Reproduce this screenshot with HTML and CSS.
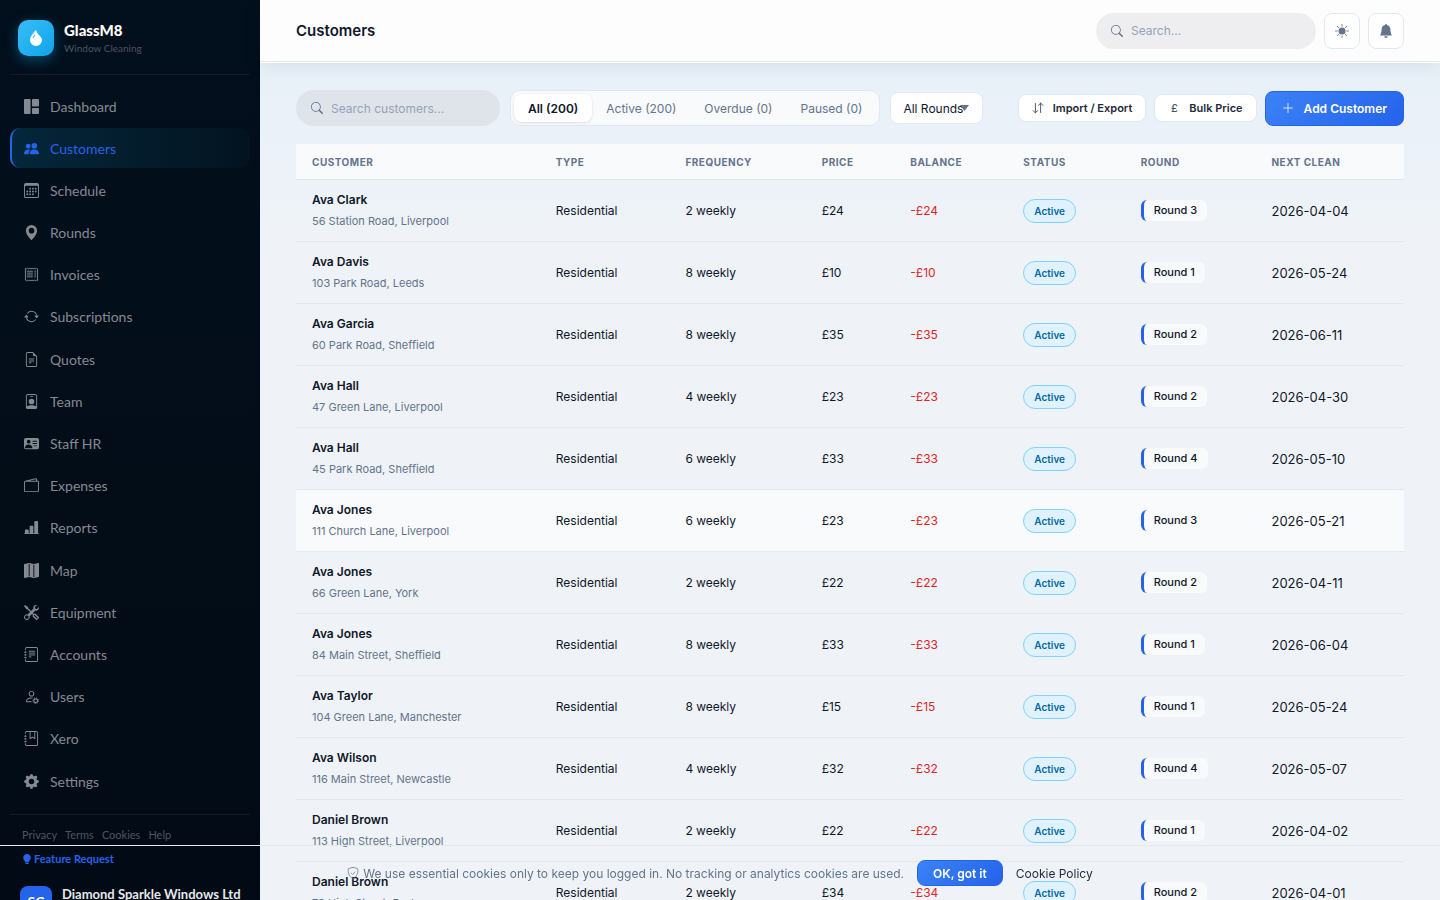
FILE: index.html
```html
<!DOCTYPE html>
<html lang="en">
<head>
  <meta charset="UTF-8" />
  <meta name="viewport" content="width=device-width, initial-scale=1.0" />
  <title>Customers - GlassM8</title>
  <link rel="stylesheet" href="styles.css">
</head>
<body>
  <!-- Icon sprite -->
  <svg class="sprite" aria-hidden="true">
    <symbol id="i-drop" viewBox="0 0 16 16"><path fill-rule="evenodd" d="M8 16a6 6 0 0 0 6-6c0-1.655-1.122-2.904-2.432-4.362C10.254 4.176 8.75 2.503 8 0c0 0-6 5.686-6 10a6 6 0 0 0 6 6M6.646 4.646l.708.708c-.29.29-1.128 1.311-1.907 2.87l-.894-.448c.82-1.641 1.717-2.753 2.093-3.13"/></symbol>
    <symbol id="i-grid" viewBox="0 0 16 16"><rect width="7" height="16" rx="1"/><rect x="8.500" width="7.500" height="8" rx="1"/><rect x="8.500" y="9.500" width="7.500" height="6.500" rx="1"/></symbol>
    <symbol id="i-people" viewBox="0 0 16 16"><path d="M7 14s-1 0-1-1 1-4 5-4 5 3 5 4-1 1-1 1zm4-6a3 3 0 1 0 0-6 3 3 0 0 0 0 6m-5.784 6A2.24 2.24 0 0 1 5 13c0-1.355.68-2.75 1.936-3.720A6.300 6.300 0 0 0 5 9c-4 0-5 3-5 4s1 1 1 1zM4.500 8a2.500 2.500 0 1 0 0-5 2.500 2.500 0 0 0 0 5"/></symbol>
    <symbol id="i-calendar" viewBox="0 0 16 16"><path fill-rule="evenodd" d="M14 0H2a2 2 0 0 0-2 2v12a2 2 0 0 0 2 2h12a2 2 0 0 0 2-2V2a2 2 0 0 0-2-2M1 3.857C1 3.384 1.448 3 2 3h12c.552 0 1 .384 1 .857v10.286c0 .473-.448.857-1 .857H2c-.552 0-1-.384-1-.857z"/><path d="M6.500 7a1 1 0 1 0 0-2 1 1 0 0 0 0 2m3 0a1 1 0 1 0 0-2 1 1 0 0 0 0 2m3 0a1 1 0 1 0 0-2 1 1 0 0 0 0 2m-9 3a1 1 0 1 0 0-2 1 1 0 0 0 0 2m3 0a1 1 0 1 0 0-2 1 1 0 0 0 0 2m3 0a1 1 0 1 0 0-2 1 1 0 0 0 0 2m3 0a1 1 0 1 0 0-2 1 1 0 0 0 0 2m-9 3a1 1 0 1 0 0-2 1 1 0 0 0 0 2m3 0a1 1 0 1 0 0-2 1 1 0 0 0 0 2m3 0a1 1 0 1 0 0-2 1 1 0 0 0 0 2"/></symbol>
    <symbol id="i-pin" viewBox="0 0 16 16"><path fill-rule="evenodd" d="M8 16s6-5.686 6-10A6 6 0 0 0 2 6c0 4.314 6 10 6 10m0-7a3 3 0 1 1 0-6 3 3 0 0 1 0 6"/></symbol>
    <symbol id="i-receipt" viewBox="0 0 16 16"><path fill="none" stroke="currentColor" d="M1.500 1.500l1 .5 1-.7 1 .7 1-.7 1 .7 1-.7 1 .7 1-.7 1 .7 1-.7 1 .7 1-.7 1 .7v12.500l-1-.5-1 .7-1-.7-1 .7-1-.7-1 .7-1-.7-1 .7-1-.7-1 .7-1-.7-1 .7-1-.7z"/><path fill="none" stroke="currentColor" d="M3 4.500h6.500M3 6.500h6.500M3 8.500h6.500M3 10.500h6.500M11 4.500h2M11 6.500h2M11 8.500h2M11 10.500h2"/></symbol>
    <symbol id="i-repeat" viewBox="0 0 16 16"><path d="M11.534 7h3.932a.25.25 0 0 1 .192.41l-1.966 2.36a.25.25 0 0 1-.384 0l-1.966-2.36a.25.25 0 0 1 .192-.41m-11 2h3.932a.25.25 0 0 0 .192-.41L2.692 6.23a.25.25 0 0 0-.384 0L.342 8.59A.25.25 0 0 0 .534 9"/><path d="M8 3c-1.552 0-2.94.707-3.857 1.818a.5.5 0 1 1-.771-.636A6.002 6.002 0 0 1 13.917 7H12.900A5 5 0 0 0 8 3M3.100 9a5.002 5.002 0 0 0 8.757 2.182.5.5 0 1 1 .771.636A6.002 6.002 0 0 1 2.083 9z"/></symbol>
    <symbol id="i-file" viewBox="0 0 16 16"><path d="M5.500 7a.5.5 0 0 0 0 1h5a.5.5 0 0 0 0-1zM5 9.500a.5.5 0 0 1 .5-.5h5a.5.5 0 0 1 0 1h-5a.5.5 0 0 1-.5-.5m0 2a.5.5 0 0 1 .5-.5h2a.5.5 0 0 1 0 1h-2a.5.5 0 0 1-.5-.5"/><path fill-rule="evenodd" d="M9.500 0H4a2 2 0 0 0-2 2v12a2 2 0 0 0 2 2h8a2 2 0 0 0 2-2V4.500zm0 1v2A1.500 1.500 0 0 0 11 4.500h2V14a1 1 0 0 1-1 1H4a1 1 0 0 1-1-1V2a1 1 0 0 1 1-1z"/></symbol>
    <symbol id="i-badge" viewBox="0 0 16 16"><path d="M6.500 2a.5.5 0 0 0 0 1h3a.5.5 0 0 0 0-1zM11 8a3 3 0 1 1-6 0 3 3 0 0 1 6 0"/><path fill-rule="evenodd" d="M4.500 0A2.500 2.500 0 0 0 2 2.500V14a2 2 0 0 0 2 2h8a2 2 0 0 0 2-2V2.500A2.500 2.500 0 0 0 11.500 0zM3 2.500A1.500 1.500 0 0 1 4.500 1h7A1.500 1.500 0 0 1 13 2.500v10.795a4.200 4.200 0 0 0-.776-.492C11.392 12.387 10.063 12 8 12s-3.392.387-4.224.803a4.200 4.200 0 0 0-.776.492z"/></symbol>
    <symbol id="i-vcard" viewBox="0 0 16 16"><path fill-rule="evenodd" d="M0 4a2 2 0 0 1 2-2h12a2 2 0 0 1 2 2v8a2 2 0 0 1-2 2H2a2 2 0 0 1-2-2zm9 1.500a.5.5 0 0 0 .5.5h4a.5.5 0 0 0 0-1h-4a.5.5 0 0 0-.5.5M9 8a.5.5 0 0 0 .5.5h4a.5.5 0 0 0 0-1h-4A.5.5 0 0 0 9 8m1 2.500a.5.5 0 0 0 .5.5h3a.5.5 0 0 0 0-1h-3a.5.5 0 0 0-.5.5m-1 2C9 10.567 7.210 9 5 9c-2.086 0-3.800 1.398-3.984 3.181A1 1 0 0 0 2 13h6.960q.04-.245.04-.5M7 6a2 2 0 1 0-4 0 2 2 0 0 0 4 0"/></symbol>
    <symbol id="i-wallet" viewBox="0 0 16 16"><path fill-rule="evenodd" d="M12.136.326A1.500 1.500 0 0 1 14 1.780V3h.5A1.500 1.500 0 0 1 16 4.500v9a1.500 1.500 0 0 1-1.500 1.500h-13A1.500 1.500 0 0 1 0 13.500v-9a1.500 1.500 0 0 1 1.432-1.499zM5.562 3H13V1.780a.5.5 0 0 0-.621-.484zM1.500 4a.5.5 0 0 0-.5.5v9a.5.5 0 0 0 .5.5h13a.5.5 0 0 0 .5-.5v-9a.5.5 0 0 0-.5-.5z"/></symbol>
    <symbol id="i-chart" viewBox="0 0 16 16"><path d="M11 2a1 1 0 0 1 1-1h2a1 1 0 0 1 1 1v12h.5a.5.5 0 0 1 0 1H.5a.5.5 0 0 1 0-1H1v-3a1 1 0 0 1 1-1h2a1 1 0 0 1 1 1v3h1V7a1 1 0 0 1 1-1h2a1 1 0 0 1 1 1v7h1z"/></symbol>
    <symbol id="i-map" viewBox="0 0 16 16"><path fill-rule="evenodd" d="M16 .5a.5.5 0 0 0-.598-.49L10.500.99 5.598.01a.5.5 0 0 0-.196 0l-5 1A.5.5 0 0 0 0 1.500v14a.5.5 0 0 0 .598.49l4.902-.98 4.902.98a.5.5 0 0 0 .196 0l5-1A.5.5 0 0 0 16 14.500zM5 14.090V1.110l.5-.1.5.1v12.980l-.402-.08a.5.5 0 0 0-.196 0zm5 .8V1.910l.402.08a.5.5 0 0 0 .196 0L11 1.910v12.980l-.5.1z"/></symbol>
    <symbol id="i-tools" viewBox="0 0 16 16"><path fill-rule="evenodd" d="M1 0 0 1l2.200 3.081a1 1 0 0 0 .815.419h.07a1 1 0 0 1 .708.293l2.675 2.675-2.617 2.654A3.003 3.003 0 0 0 0 13a3 3 0 1 0 5.878-.851l2.654-2.617.968.968-.305.914a1 1 0 0 0 .242 1.023l3.270 3.270a.997.997 0 0 0 1.414 0l1.586-1.586a.997.997 0 0 0 0-1.414l-3.270-3.270a1 1 0 0 0-1.023-.242L10.500 9.500l-.96-.96 2.680-2.643A3.005 3.005 0 0 0 16 3q0-.405-.102-.777l-2.140 2.141L12 4l-.364-1.757L13.777.102a3 3 0 0 0-3.675 3.680L7.462 6.460 4.793 3.793a1 1 0 0 1-.293-.707v-.071a1 1 0 0 0-.419-.814zm9.646 10.646a.5.5 0 0 1 .708 0l2.914 2.915a.5.5 0 0 1-.707.707l-2.915-2.914a.5.5 0 0 1 0-.708M3 11l.471.242.529.026.287.445.445.287.026.529L5 13l-.242.471-.026.529-.445.287-.287.445-.529.026L3 15l-.471-.242L2 14.732l-.287-.445L1.268 14l-.026-.529L1 13l.242-.471.026-.529.445-.287.287-.445.529-.026z"/></symbol>
    <symbol id="i-journal" viewBox="0 0 16 16"><path d="M3 0h10a2 2 0 0 1 2 2v12a2 2 0 0 1-2 2H3a2 2 0 0 1-2-2v-1h1v1a1 1 0 0 0 1 1h10a1 1 0 0 0 1-1V2a1 1 0 0 0-1-1H3a1 1 0 0 0-1 1v1H1V2a2 2 0 0 1 2-2"/><path d="M1 5v-.5a.5.5 0 0 1 1 0V5h.5a.5.5 0 0 1 0 1h-2a.5.5 0 0 1 0-1zm0 3v-.5a.5.5 0 0 1 1 0V8h.5a.5.5 0 0 1 0 1h-2a.5.5 0 0 1 0-1zm0 3v-.5a.5.5 0 0 1 1 0v.5h.5a.5.5 0 0 1 0 1h-2a.5.5 0 0 1 0-1z"/><path fill="none" stroke="currentColor" stroke-linecap="round" d="M5.500 4.500h6M5.500 6.500h6M5.500 8.500h6M5.500 10.500h2"/></symbol>
    <symbol id="i-bookmark" viewBox="0 0 16 16"><path d="M3 0h10a2 2 0 0 1 2 2v12a2 2 0 0 1-2 2H3a2 2 0 0 1-2-2v-1h1v1a1 1 0 0 0 1 1h10a1 1 0 0 0 1-1V2a1 1 0 0 0-1-1H3a1 1 0 0 0-1 1v1H1V2a2 2 0 0 1 2-2"/><path d="M1 5v-.5a.5.5 0 0 1 1 0V5h.5a.5.5 0 0 1 0 1h-2a.5.5 0 0 1 0-1zm0 3v-.5a.5.5 0 0 1 1 0V8h.5a.5.5 0 0 1 0 1h-2a.5.5 0 0 1 0-1zm0 3v-.5a.5.5 0 0 1 1 0v.5h.5a.5.5 0 0 1 0 1h-2a.5.5 0 0 1 0-1z"/><path d="M6 8V1h1v6.117L8.743 6.070a.5.5 0 0 1 .514 0L11 7.117V1h1v7a.5.5 0 0 1-.757.429L9 7.083 6.757 8.430A.5.5 0 0 1 6 8"/></symbol>
    <symbol id="i-user-gear" viewBox="0 0 16 16"><path fill-rule="evenodd" d="M11 5a3 3 0 1 1-6 0 3 3 0 0 1 6 0M8 7a2 2 0 1 0 0-4 2 2 0 0 0 0 4m.256 7a4.500 4.500 0 0 1-.229-1.004H3c.001-.246.154-.986.832-1.664C4.484 10.680 5.711 10 8 10q.39 0 .74.025c.226-.341.496-.65.804-.918Q8.844 9.002 8 9c-5 0-6 3-6 4s1 1 1 1z"/><circle cx="12.500" cy="12.500" r="2" fill="none" stroke="currentColor" stroke-width="1.300"/><circle cx="12.500" cy="12.500" r="3.100" fill="none" stroke="currentColor" stroke-dasharray="1.200 1.235"/></symbol>
    <symbol id="i-gear" viewBox="0 0 16 16"><path fill-rule="evenodd" d="M9.405 1.050c-.413-1.400-2.397-1.400-2.810 0l-.1.34a1.464 1.464 0 0 1-2.105.872l-.31-.17c-1.283-.698-2.686.705-1.987 1.987l.169.311c.446.82.023 1.841-.872 2.105l-.34.1c-1.400.413-1.400 2.397 0 2.810l.34.1a1.464 1.464 0 0 1 .872 2.105l-.17.31c-.698 1.283.705 2.686 1.987 1.987l.311-.169a1.464 1.464 0 0 1 2.105.872l.1.34c.413 1.400 2.397 1.400 2.810 0l.1-.34a1.464 1.464 0 0 1 2.105-.872l.31.17c1.283.698 2.686-.705 1.987-1.987l-.169-.311a1.464 1.464 0 0 1 .872-2.105l.34-.1c1.400-.413 1.400-2.397 0-2.810l-.34-.1a1.464 1.464 0 0 1-.872-2.105l.17-.31c.698-1.283-.705-2.686-1.987-1.987l-.311.169a1.464 1.464 0 0 1-2.105-.872zM8 10.930a2.929 2.929 0 1 1 0-5.860 2.929 2.929 0 0 1 0 5.858z"/></symbol>
    <symbol id="i-bulb" viewBox="0 0 16 16"><path d="M2 6a6 6 0 1 1 10.174 4.310c-.203.196-.359.4-.453.619l-.762 1.769A.5.5 0 0 1 10.500 13h-5a.5.5 0 0 1-.46-.302l-.761-1.770a2 2 0 0 0-.453-.618A5.980 5.980 0 0 1 2 6m3 8.500a.5.5 0 0 1 .5-.5h5a.5.5 0 0 1 0 1l-.224.447a1 1 0 0 1-.894.553H6.618a1 1 0 0 1-.894-.553L5.500 15a.5.5 0 0 1-.5-.5"/></symbol>
    <symbol id="i-search" viewBox="0 0 16 16"><path fill-rule="evenodd" d="M11.742 10.344a6.500 6.500 0 1 0-1.397 1.398h-.001q.044.06.098.115l3.850 3.850a1 1 0 0 0 1.415-1.414l-3.850-3.850a1 1 0 0 0-.115-.1zM12 6.500a5.500 5.500 0 1 1-11 0 5.500 5.500 0 0 1 11 0"/></symbol>
    <symbol id="i-sun" viewBox="0 0 16 16"><circle cx="8" cy="8" r="4"/><path fill="none" stroke="currentColor" stroke-linecap="round" d="M8 .5v2M8 13.500v2M.5 8h2M13.500 8h2M2.700 2.700l1.400 1.400M11.900 11.900l1.400 1.400M2.700 13.300l1.400-1.400M11.900 4.100l1.400-1.400"/></symbol>
    <symbol id="i-bell" viewBox="0 0 16 16"><path d="M8 16a2 2 0 0 0 2-2H6a2 2 0 0 0 2 2m.995-14.901a1 1 0 1 0-1.990 0A5 5 0 0 0 3 6c0 1.098-.5 6-2 7h14c-1.500-1-2-5.902-2-7 0-2.420-1.720-4.440-4.005-4.901"/></symbol>
    <symbol id="i-swap" viewBox="0 0 16 16"><path fill="none" stroke="currentColor" stroke-linecap="round" stroke-linejoin="round" stroke-width="1.300" d="M4.500 2v12.500M1.500 11.500l3 3 3-3M11.500 14V1.500M8.500 4.500l3-3 3 3"/></symbol>
    <symbol id="i-plus" viewBox="0 0 16 16"><path fill="none" stroke="currentColor" stroke-linecap="round" d="M8 2v12M2 8h12"/></symbol>
    <symbol id="i-caret" viewBox="0 0 9 6"><path d="M0 0h9L4.500 6z"/></symbol>
    <symbol id="i-shield" viewBox="0 0 16 16"><path fill="none" stroke="currentColor" stroke-linecap="round" stroke-linejoin="round" d="M8 .6c-.8 0-3.600.8-5.800 1.500a.9.9 0 0 0-.6.7c-.7 5 1.300 8.300 2.900 10.100 1.300 1.500 2.900 2.500 3.500 2.500s2.200-1 3.500-2.500c1.600-1.800 3.600-5.100 2.900-10.100a.9.9 0 0 0-.6-.7C11.600 1.400 8.800.6 8 .6zM5.500 8l2 2 3.300-3.500"/></symbol>
  </svg>

  <aside class="sidebar">
    <div class="brand">
      <div class="brand-logo"><svg class="icon"><use href="#i-drop"/></svg></div>
      <div>
        <div class="brand-name">GlassM8</div>
        <div class="brand-sub">Window Cleaning</div>
      </div>
    </div>

    <nav class="nav">
      <a href="#"><svg class="icon"><use href="#i-grid"/></svg>Dashboard</a>
      <a href="#" class="active"><svg class="icon"><use href="#i-people"/></svg>Customers</a>
      <a href="#"><svg class="icon"><use href="#i-calendar"/></svg>Schedule</a>
      <a href="#"><svg class="icon"><use href="#i-pin"/></svg>Rounds</a>
      <a href="#"><svg class="icon"><use href="#i-receipt"/></svg>Invoices</a>
      <a href="#"><svg class="icon"><use href="#i-repeat"/></svg>Subscriptions</a>
      <a href="#"><svg class="icon"><use href="#i-file"/></svg>Quotes</a>
      <a href="#"><svg class="icon"><use href="#i-badge"/></svg>Team</a>
      <a href="#"><svg class="icon"><use href="#i-vcard"/></svg>Staff HR</a>
      <a href="#"><svg class="icon"><use href="#i-wallet"/></svg>Expenses</a>
      <a href="#"><svg class="icon"><use href="#i-chart"/></svg>Reports</a>
      <a href="#"><svg class="icon"><use href="#i-map"/></svg>Map</a>
      <a href="#"><svg class="icon"><use href="#i-tools"/></svg>Equipment</a>
      <a href="#"><svg class="icon"><use href="#i-journal"/></svg>Accounts</a>
      <a href="#"><svg class="icon"><use href="#i-user-gear"/></svg>Users</a>
      <a href="#"><svg class="icon"><use href="#i-bookmark"/></svg>Xero</a>
      <a href="#"><svg class="icon"><use href="#i-gear"/></svg>Settings</a>
    </nav>

    <div class="side-footer">
      <div class="legal">
        <a href="#">Privacy</a>
        <a href="#">Terms</a>
        <a href="#">Cookies</a>
        <a href="#">Help</a>
      </div>
      <a href="#" class="feature"><svg class="icon"><use href="#i-bulb"/></svg>Feature Request</a>
      <div class="account">
        <div class="avatar">SC</div>
        <div class="account-name">Diamond Sparkle Windows Ltd</div>
      </div>
    </div>
  </aside>

  <div class="page">
    <header class="topbar">
      <h1>Customers</h1>
      <label class="search search-top">
        <svg class="icon"><use href="#i-search"/></svg>
        <input type="search" placeholder="Search..." aria-label="Search" />
      </label>
      <button class="icon-btn" aria-label="Toggle theme"><svg class="icon"><use href="#i-sun"/></svg></button>
      <button class="icon-btn" aria-label="Notifications"><svg class="icon"><use href="#i-bell"/></svg></button>
    </header>

    <main>
      <div class="toolbar">
        <label class="search">
          <svg class="icon"><use href="#i-search"/></svg>
          <input type="search" placeholder="Search customers..." aria-label="Search customers" />
        </label>
        <div class="tabs">
          <button class="active">All (200)</button>
          <button>Active (200)</button>
          <button>Overdue (0)</button>
          <button>Paused (0)</button>
        </div>
        <div class="select">
          <select aria-label="Round">
            <option>All Rounds</option>
            <option>Round 1</option>
            <option>Round 2</option>
            <option>Round 3</option>
            <option>Round 4</option>
          </select>
          <svg class="caret"><use href="#i-caret"/></svg>
        </div>
        <div class="actions">
          <button class="btn"><svg class="icon"><use href="#i-swap"/></svg>Import / Export</button>
          <button class="btn"><span class="pound">£</span>Bulk Price</button>
          <button class="btn btn-primary"><svg class="icon"><use href="#i-plus"/></svg>Add Customer</button>
        </div>
      </div>

      <table>
        <thead>
          <tr>
            <th class="col-customer">Customer</th>
            <th class="col-type">Type</th>
            <th class="col-frequency">Frequency</th>
            <th class="col-price">Price</th>
            <th class="col-balance">Balance</th>
            <th class="col-status">Status</th>
            <th class="col-round">Round</th>
            <th class="col-next">Next Clean</th>
          </tr>
        </thead>
        <tbody>
          <tr>
            <td><div class="name">Ava Clark</div><div class="address">56 Station Road, Liverpool</div></td>
            <td>Residential</td><td>2 weekly</td><td>£24</td><td class="owed">-£24</td>
            <td><span class="status">Active</span></td><td><span class="round">Round 3</span></td><td class="date">2026-04-04</td>
          </tr>
          <tr>
            <td><div class="name">Ava Davis</div><div class="address">103 Park Road, Leeds</div></td>
            <td>Residential</td><td>8 weekly</td><td>£10</td><td class="owed">-£10</td>
            <td><span class="status">Active</span></td><td><span class="round">Round 1</span></td><td class="date">2026-05-24</td>
          </tr>
          <tr>
            <td><div class="name">Ava Garcia</div><div class="address">60 Park Road, Sheffield</div></td>
            <td>Residential</td><td>8 weekly</td><td>£35</td><td class="owed">-£35</td>
            <td><span class="status">Active</span></td><td><span class="round">Round 2</span></td><td class="date">2026-06-11</td>
          </tr>
          <tr>
            <td><div class="name">Ava Hall</div><div class="address">47 Green Lane, Liverpool</div></td>
            <td>Residential</td><td>4 weekly</td><td>£23</td><td class="owed">-£23</td>
            <td><span class="status">Active</span></td><td><span class="round">Round 2</span></td><td class="date">2026-04-30</td>
          </tr>
          <tr>
            <td><div class="name">Ava Hall</div><div class="address">45 Park Road, Sheffield</div></td>
            <td>Residential</td><td>6 weekly</td><td>£33</td><td class="owed">-£33</td>
            <td><span class="status">Active</span></td><td><span class="round">Round 4</span></td><td class="date">2026-05-10</td>
          </tr>
          <tr class="current">
            <td><div class="name">Ava Jones</div><div class="address">111 Church Lane, Liverpool</div></td>
            <td>Residential</td><td>6 weekly</td><td>£23</td><td class="owed">-£23</td>
            <td><span class="status">Active</span></td><td><span class="round">Round 3</span></td><td class="date">2026-05-21</td>
          </tr>
          <tr>
            <td><div class="name">Ava Jones</div><div class="address">66 Green Lane, York</div></td>
            <td>Residential</td><td>2 weekly</td><td>£22</td><td class="owed">-£22</td>
            <td><span class="status">Active</span></td><td><span class="round">Round 2</span></td><td class="date">2026-04-11</td>
          </tr>
          <tr>
            <td><div class="name">Ava Jones</div><div class="address">84 Main Street, Sheffield</div></td>
            <td>Residential</td><td>8 weekly</td><td>£33</td><td class="owed">-£33</td>
            <td><span class="status">Active</span></td><td><span class="round">Round 1</span></td><td class="date">2026-06-04</td>
          </tr>
          <tr>
            <td><div class="name">Ava Taylor</div><div class="address">104 Green Lane, Manchester</div></td>
            <td>Residential</td><td>8 weekly</td><td>£15</td><td class="owed">-£15</td>
            <td><span class="status">Active</span></td><td><span class="round">Round 1</span></td><td class="date">2026-05-24</td>
          </tr>
          <tr>
            <td><div class="name">Ava Wilson</div><div class="address">116 Main Street, Newcastle</div></td>
            <td>Residential</td><td>4 weekly</td><td>£32</td><td class="owed">-£32</td>
            <td><span class="status">Active</span></td><td><span class="round">Round 4</span></td><td class="date">2026-05-07</td>
          </tr>
          <tr>
            <td><div class="name">Daniel Brown</div><div class="address">113 High Street, Liverpool</div></td>
            <td>Residential</td><td>2 weekly</td><td>£22</td><td class="owed">-£22</td>
            <td><span class="status">Active</span></td><td><span class="round">Round 1</span></td><td class="date">2026-04-02</td>
          </tr>
          <tr>
            <td><div class="name">Daniel Brown</div><div class="address">78 High Street, Derby</div></td>
            <td>Residential</td><td>2 weekly</td><td>£34</td><td class="owed">-£34</td>
            <td><span class="status">Active</span></td><td><span class="round">Round 2</span></td><td class="date">2026-04-01</td>
          </tr>
        </tbody>
      </table>
    </main>
  </div>

  <div class="cookie-bar">
    <p><svg class="icon"><use href="#i-shield"/></svg>We use essential cookies only to keep you logged in. No tracking or analytics cookies are used.</p>
    <button>OK, got it</button>
    <a href="#">Cookie Policy</a>
  </div>
</body>
</html>
```
FILE: styles.css
```css
* {
  box-sizing: border-box;
}
body {
  font-family: Inter, sans-serif;
  font-size: 12px;
  margin: 0;
  height: 100vh;
  display: flex;
  overflow: hidden;
  background: #eff3f8;
  color: #0f172a;
}
button, input, select {
  font-family: inherit;
}
button {
  cursor: pointer;
}
a {
  text-decoration: none;
}
.sprite {
  display: none;
}
.icon {
  width: 15px;
  height: 15px;
  flex: none;
  fill: currentColor;
}

/* Sidebar */
.sidebar {
  width: 260px;
  flex: none;
  height: 100vh;
  display: flex;
  flex-direction: column;
  padding: 0 10px;
  font-family: Lato, sans-serif;
  background: linear-gradient(180deg, #020f1c, #020b15);
}
.brand {
  display: flex;
  align-items: center;
  gap: 10px;
  height: 75px;
  padding: 1px 8px 0;
  flex: none;
  border-bottom: 1px solid #101c28;
}
.brand-logo {
  width: 36px;
  height: 36px;
  display: flex;
  align-items: center;
  justify-content: center;
  border-radius: 10px;
  background: linear-gradient(135deg, #38bdf8, #0ea5e9);
  box-shadow: 0 4px 14px rgba(14, 165, 233, 0.4);
  color: #fff;
}
.brand-logo .icon {
  width: 16px;
  height: 16px;
}
.brand-name {
  font-size: 15px;
  line-height: 20px;
  font-weight: 900;
  color: #fff;
}
.brand-sub {
  font-size: 10px;
  line-height: 16px;
  color: #4b5560;
}
.nav {
  flex: 1;
  display: flex;
  flex-direction: column;
  justify-content: space-between;
  padding: 11px 0 13px;
}
.nav a {
  display: flex;
  align-items: center;
  gap: 11px;
  height: 40px;
  padding: 0 12px;
  border-left: 2px solid transparent;
  border-radius: 10px;
  font-size: 14px;
  color: #848a91;
}
.nav a.active {
  color: #2563eb;
  border-left-color: #2563eb;
  background: linear-gradient(90deg, #04273b, #03131f);
}
.side-footer {
  height: 86px;
  flex: none;
  overflow: hidden;
  border-top: 1px solid #101c28;
}
.legal {
  display: flex;
  gap: 8px;
  padding: 12px 12px 0;
  line-height: 16px;
}
.legal a {
  font-size: 11px;
  color: #4b5563;
}
.feature {
  display: flex;
  align-items: center;
  gap: 2px;
  padding: 8px 12px;
  font-size: 11px;
  line-height: 16px;
  font-weight: bold;
  color: #2563eb;
}
.feature .icon {
  width: 10px;
  height: 10px;
}
.account {
  display: flex;
  gap: 10px;
  padding: 11px 10px 0;
}
.avatar {
  width: 32px;
  height: 32px;
  flex: none;
  border-radius: 8px;
  background: #2563eb;
  color: #fff;
  font-size: 14px;
  line-height: 32px;
  font-weight: bold;
  text-align: center;
}
.account-name {
  font-size: 13px;
  line-height: 16px;
  font-weight: bold;
  white-space: nowrap;
  color: #e5e7eb;
}

/* Top bar */
.page {
  flex: 1;
  min-width: 0;
  background: linear-gradient(180deg, #e8f0f8 60px, #eff3f8 240px);
}
.topbar {
  display: flex;
  align-items: center;
  gap: 8px;
  height: 62px;
  padding: 0 36px;
  background: #fdfdfe;
  border-bottom: 1px solid #e2e8f0;
  box-shadow: 0 1px 0 #fff, 0 4px 20px rgba(15, 23, 42, 0.08);
}
h1 {
  margin: 0 auto 0 0;
  font-size: 15px;
  font-weight: 600;
}
.search {
  display: flex;
  align-items: center;
  gap: 8px;
  width: 204px;
  height: 36px;
  padding: 0 15px;
  border-radius: 18px;
  background: #dfe4eb;
  color: #64748b;
}
.search .icon {
  width: 12px;
  height: 12px;
}
.search input {
  flex: 1;
  min-width: 0;
  padding: 0;
  border: 0;
  outline: 0;
  background: none;
  font-size: 12px;
}
.search input::placeholder {
  color: #94a3b8;
}
.search-top {
  width: 220px;
  background: #eeeef0;
}
.icon-btn {
  width: 36px;
  height: 36px;
  display: flex;
  align-items: center;
  justify-content: center;
  padding: 0;
  border: 1px solid #e2e8f0;
  border-radius: 8px;
  background: #fff;
  color: #64748b;
}
.icon-btn .icon {
  width: 14px;
  height: 14px;
}

/* Toolbar */
main {
  padding: 28px 36px 0;
}
.toolbar {
  display: flex;
  align-items: center;
  margin-bottom: 18px;
}
.tabs {
  display: flex;
  height: 36px;
  margin: 0 10px;
  padding: 3px;
  border: 1px solid #e2e8f0;
  border-radius: 10px;
  background: #f8fafc;
}
.tabs button {
  padding: 0 14px;
  border: 0;
  border-radius: 8px;
  background: none;
  font-size: 12px;
  font-weight: 400;
  color: #64748b;
}
.tabs button.active {
  background: #fff;
  box-shadow: 0 1px 3px rgba(15, 23, 42, 0.12);
  font-weight: 600;
  color: #0f172a;
}
.select {
  position: relative;
}
.select select {
  width: 93px;
  height: 32px;
  padding: 0 0 0 12px;
  appearance: none;
  border: 1px solid #e2e8f0;
  border-radius: 8px;
  background: #fff;
  font-size: 12px;
  color: #0f172a;
}
.caret {
  position: absolute;
  top: 13px;
  right: 14px;
  width: 9px;
  height: 6px;
  fill: #64748b;
  pointer-events: none;
}
.actions {
  display: flex;
  align-items: center;
  gap: 8px;
  margin-left: auto;
}
.btn {
  display: flex;
  align-items: center;
  gap: 9px;
  height: 28px;
  padding: 0 13px;
  border: 1px solid #e2e8f0;
  border-radius: 8px;
  background: #fff;
  font-size: 11px;
  font-weight: 600;
  color: #1e293b;
}
.btn .icon, .pound {
  width: 12px;
  height: 12px;
  line-height: 12px;
  font-weight: 500;
  color: #475569;
}
.btn-primary {
  gap: 10px;
  height: 35px;
  padding: 0 16px;
  border-color: #2563eb;
  background: linear-gradient(135deg, #3b82f6, #2563eb);
  font-size: 12px;
  color: #fff;
}
.btn-primary .icon {
  color: #fff;
}

/* Customer table */
table {
  width: 100%;
  table-layout: fixed;
  border-collapse: separate;
  border-spacing: 0;
}
th {
  height: 36px;
  padding: 0 16px;
  border-bottom: 1px solid #dbe5f0;
  background: #f8fafc;
  font-size: 10px;
  font-weight: 700;
  letter-spacing: 0.5px;
  text-align: left;
  text-transform: uppercase;
  color: #64748b;
}
.col-customer { width: 22%; }
.col-type { width: 11.7%; }
.col-frequency { width: 12.3%; }
.col-price { width: 8%; }
.col-balance { width: 10.2%; }
.col-status { width: 10.6%; }
.col-round { width: 11.8%; }
td {
  height: 62px;
  padding: 0 16px;
  border-bottom: 1px solid #e2e8f0;
  white-space: nowrap;
}
.current td {
  background: #f8fafc;
}
.name {
  margin-bottom: 3px;
  font-size: 12px;
  line-height: 18px;
  font-weight: 600;
}
.address {
  font-size: 11px;
  line-height: 18px;
  color: #64748b;
}
.owed {
  color: #dc2626;
}
.date {
  font-size: 13px;
}
.status {
  display: inline-block;
  padding: 0 10px;
  border: 1px solid #7dd3fc;
  border-radius: 12px;
  background: #e0f2fe;
  font-size: 10px;
  line-height: 22px;
  font-weight: 600;
  color: #0369a1;
}
.round {
  display: inline-block;
  padding: 0 10px;
  border-left: 3px solid #2563eb;
  border-radius: 6px;
  background: #f8fafc;
  font-size: 11px;
  line-height: 21px;
  font-weight: 500;
}

/* Cookie notice */
.cookie-bar {
  position: fixed;
  left: 0;
  right: 0;
  bottom: 0;
  display: flex;
  align-items: center;
  justify-content: center;
  gap: 13px;
  height: 55px;
  border-top: 1px solid #e2e8f0;
}
.cookie-bar p {
  display: flex;
  align-items: center;
  gap: 4px;
  margin: 0;
  font-size: 12px;
  color: #64748b;
}
.cookie-bar .icon {
  width: 12px;
  height: 12px;
}
.cookie-bar button {
  height: 26px;
  padding: 0 15px;
  border: 1px solid #2563eb;
  border-radius: 8px;
  background: linear-gradient(135deg, #3b82f6, #2563eb);
  font-size: 12px;
  font-weight: 600;
  color: #fff;
}
.cookie-bar a {
  font-size: 12px;
  color: #1e293b;
}
```
